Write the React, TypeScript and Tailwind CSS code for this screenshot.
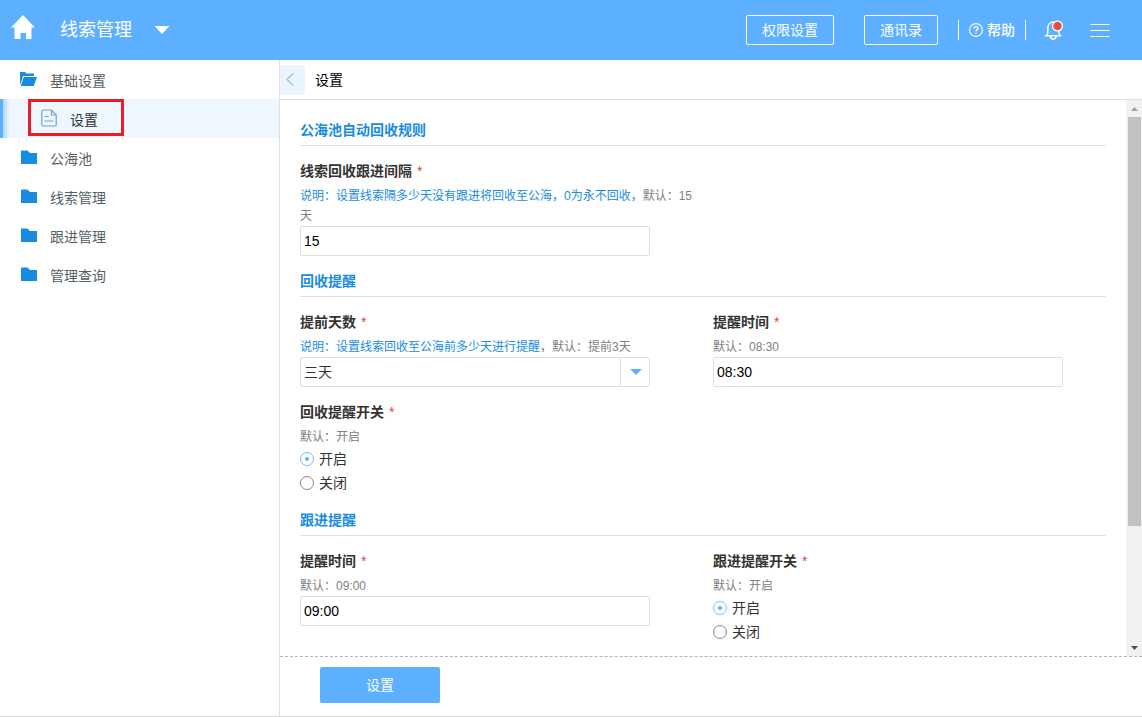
import { useState } from 'react';
import type { ReactNode } from 'react';

const folders = ['公海池', '线索管理', '跟进管理', '管理查询'];

function HomeIcon() {
  return (
    <svg width="24" height="24" viewBox="0 0 24 24" fill="#fff">
      <path d="M12 0 L24 12.5 H20.5 V24 H15 V18 H9.5 V24 H3.5 V12.5 H0 Z" />
    </svg>
  );
}

function FolderIcon() {
  return (
    <svg width="16" height="14" viewBox="0 0 16 14" fill="#188ce0">
      <path d="M0 0.5 H6.5 L9 3 H16 V14 H0 Z" />
    </svg>
  );
}

function FolderOpenIcon() {
  return (
    <svg width="17" height="14" viewBox="0 0 17 14" fill="#188ce0">
      <path d="M0 0 H5 L6.5 1.5 H14 V4 H3 L0.6 12 H0 Z" />
      <path d="M3.7 5 H17 L13.8 14 H0.8 Z" />
    </svg>
  );
}

function DocIcon() {
  return (
    <svg width="16" height="18" viewBox="0 0 16 18" fill="none" stroke="#6fa3d4" strokeWidth="1.2">
      <path d="M10.5 1 H2 Q0.8 1 0.8 2.2 V15.8 Q0.8 17 2 17 H14 Q15.2 17 15.2 15.8 V6 Z" />
      <path d="M10.5 1 V6 H15.2 M3.5 7.5 H7.5 M3.5 12 H12.5" />
    </svg>
  );
}

function HelpIcon() {
  return (
    <svg width="14" height="14" viewBox="0 0 14 14" fill="none" stroke="#fff">
      <circle cx="7" cy="7" r="6.4" strokeWidth="1.1" />
      <path d="M5 5.6 C5 3 9 3 9 5.4 C9 6.8 7 6.8 7 8.4" strokeWidth="1.4" />
      <path d="M7 9.4 V10.8" strokeWidth="1.5" />
    </svg>
  );
}

function BellIcon() {
  return (
    <svg width="20" height="20" viewBox="0 0 20 20" fill="none" stroke="#fff" strokeWidth="1.5">
      <path d="M0.8 15.8 H17.5 M3 15.5 C4 14 3.8 12 3.8 8.5 C3.8 4.5 6.2 2 9.3 2 C12.6 2 14.8 4.5 14.8 8.5 C14.8 12 14.8 14 16 15.5" />
      <path d="M6.3 16 C6.5 20.2 12 20.2 12.2 16" />
      <circle cx="13.5" cy="6" r="4.9" fill="#e0504a" strokeWidth="1.3" />
    </svg>
  );
}

function SectionTitle({ children }: { children: ReactNode }) {
  return (
    <h2 className="mt-[10px] border-b border-[#dddfe1] text-sm leading-[30px] font-bold text-[#188ce0]">
      {children}
    </h2>
  );
}

function FieldHead({ id, label, children }: { id: string; label: string; children: ReactNode }) {
  return (
    <>
      <label htmlFor={id} className="mb-[5px] flex gap-[5px] text-sm leading-5 font-bold text-[#333]">
        {label}
        <span className="font-normal text-[#e0443e]">*</span>
      </label>
      <p className="text-xs leading-5 text-[#808080]">{children}</p>
    </>
  );
}

function TextField({ id, label, hint, value }: { id: string; label: string; hint: ReactNode; value: string }) {
  const [text, setText] = useState(value);

  return (
    <div>
      <FieldHead id={id} label={label}>{hint}</FieldHead>
      <input
        id={id}
        type="text"
        value={text}
        onChange={(e) => setText(e.target.value)}
        className="block h-[30px] w-full max-w-[350px] rounded-xs border border-[#dddfe1] px-[3px] text-sm text-black outline-none"
      />
    </div>
  );
}

function SwitchField({ id, label }: { id: string; label: string }) {
  const [value, setValue] = useState('开启');

  return (
    <div>
      <FieldHead id={`${id}-开启`} label={label}>默认：开启</FieldHead>
      {['开启', '关闭'].map((option) => (
        <label key={option} className="flex h-6 items-center gap-[5px] text-sm text-[#333]">
          <input
            id={`${id}-${option}`}
            type="radio"
            name={id}
            checked={value === option}
            onChange={() => setValue(option)}
            className="grid h-[14px] w-[14px] appearance-none place-content-center rounded-full border border-[#888] before:h-1 before:w-1 before:rounded-full checked:border-[#7ab8fa] checked:before:bg-[#5cb0ff]"
          />
          {option}
        </label>
      ))}
    </div>
  );
}

function Header() {
  return (
    <header className="flex h-[60px] shrink-0 items-center bg-[#5cb0ff] pr-8 pl-[11px] text-white">
      <a href="#" aria-label="首页" className="pb-[6px]">
        <HomeIcon />
      </a>
      <button type="button" className="ml-[25px] flex items-center gap-[22px] text-lg">
        线索管理
        <svg width="16" height="8" viewBox="0 0 16 8" fill="#fff">
          <path d="M0.5 0 H15.5 L8 8 Z" />
        </svg>
      </button>
      <div className="ml-auto flex items-center text-sm">
        <button type="button" className="h-[30px] rounded-xs border border-white px-[15px]">权限设置</button>
        <button type="button" className="ml-[30px] h-[30px] rounded-xs border border-white px-[15px]">通讯录</button>
        <a href="#" className="ml-5 flex h-5 items-center gap-1 border-x border-white px-[10px] font-medium">
          <HelpIcon />
          帮助
        </a>
        <button type="button" aria-label="消息" className="ml-[18px]">
          <BellIcon />
        </button>
        <button type="button" aria-label="菜单" className="ml-[26px]">
          <svg width="20" height="14" viewBox="0 0 20 14" stroke="#fff">
            <path d="M0.5 1.5 H19.5 M0.5 7.5 H19.5 M0.5 13.5 H19.5" />
          </svg>
        </button>
      </div>
    </header>
  );
}

function Sidebar() {
  return (
    <nav className="w-[280px] shrink-0 border-r border-[#dddfe1] text-sm text-[#555f66]">
      <a href="#" className="flex h-[39px] items-center gap-[13px] pb-[2px] pl-5">
        <FolderOpenIcon />
        <span className="pt-1">基础设置</span>
      </a>
      <a href="#" className="relative flex h-[39px] items-center gap-[13px] border-l-3 border-[#5cb0ff] bg-[#eef7ff] pb-[2px] pl-[38px] text-[#333]">
        <span className="absolute inset-y-0 left-0 w-[7px] bg-linear-to-r from-[#b5d6f6] to-[#eef7ff]" />
        <DocIcon />
        <span className="pt-1">设置</span>
        <span className="absolute top-0 left-[25px] h-[37px] w-24 border-3 border-[#ed1c24]" />
      </a>
      {folders.map((name) => (
        <a key={name} href="#" className="flex h-[39px] items-center gap-[13px] pb-[2px] pl-[21px]">
          <FolderIcon />
          <span className="pt-1">{name}</span>
        </a>
      ))}
    </nav>
  );
}

function ScrollRail() {
  return (
    <div className="flex w-4 shrink-0 flex-col bg-[#f1f1f1] pr-px pl-[2px]" aria-hidden="true">
      <div className="flex h-[17px] shrink-0 items-center justify-center">
        <svg width="7" height="4" viewBox="0 0 7 4" fill="#a0a0a0"><path d="M3.5 0 L7 4 H0 Z" /></svg>
      </div>
      <div className="flex min-h-0 flex-1 flex-col">
        <div className="flex-[18] bg-[#c1c1c1]" />
        <div className="flex-[5]" />
      </div>
      <div className="flex h-[17px] shrink-0 items-center justify-center">
        <svg width="7" height="4" viewBox="0 0 7 4" fill="#505050"><path d="M0 0 H7 L3.5 4 Z" /></svg>
      </div>
    </div>
  );
}

export default function App() {
  const [days, setDays] = useState('三天');

  return (
    <div className="flex h-screen flex-col border-b border-[#d3d5d7] bg-white font-['Liberation_Sans','Noto_Sans_CJK_SC',sans-serif]">
      <Header />
      <div className="flex min-h-0 flex-1">
        <Sidebar />
        <main className="flex min-w-0 flex-1 flex-col">
          <div className="flex h-10 shrink-0 items-center gap-[10px] border-b border-[#dddfe1]">
            <button type="button" aria-label="返回" className="flex h-[30px] w-[25px] items-center rounded-r-sm bg-[#eaf4ff] pl-[6px]">
              <svg width="8" height="13" viewBox="0 0 8 13" fill="none" stroke="#4a90d9">
                <path d="M7 0.5 L1 6.5 L7 12.5" />
              </svg>
            </button>
            <h1 className="text-sm text-black">设置</h1>
          </div>

          <form className="flex min-h-0 flex-1 flex-col" onSubmit={(e) => e.preventDefault()}>
            <div className="flex min-h-0 flex-1">
              <div className="min-w-0 flex-1 overflow-y-auto px-5 pt-[5px] [scrollbar-width:none]">
                <SectionTitle>公海池自动回收规则</SectionTitle>
                <div className="grid grid-cols-2 gap-x-5 gap-y-[15px] pt-[15px]">
                  <TextField
                    id="interval"
                    label="线索回收跟进间隔"
                    value="15"
                    hint={
                      <>
                        <span className="text-[#188ce0]">说明：设置线索隔多少天没有跟进将回收至公海，0为永不回收，</span>
                        默认：15天
                      </>
                    }
                  />
                </div>

                <SectionTitle>回收提醒</SectionTitle>
                <div className="grid grid-cols-2 gap-x-5 gap-y-[15px] pt-[15px]">
                  <div>
                    <FieldHead id="days" label="提前天数">
                      <span className="text-[#188ce0]">说明：设置线索回收至公海前多少天进行提醒</span>
                      ，默认：提前3天
                    </FieldHead>
                    <div className="relative max-w-[350px]">
                      <select
                        id="days"
                        value={days}
                        onChange={(e) => setDays(e.target.value)}
                        className="block h-[30px] w-full appearance-none rounded-xs border border-[#dddfe1] px-[3px] text-sm text-[#333] outline-none"
                      >
                        <option>一天</option>
                        <option>二天</option>
                        <option>三天</option>
                      </select>
                      <span className="pointer-events-none absolute inset-y-0 right-0 flex w-[30px] items-center justify-center border-l border-[#dddfe1]">
                        <svg width="12" height="6" viewBox="0 0 12 6" fill="#5cb0ff"><path d="M0 0 H12 L6 6 Z" /></svg>
                      </span>
                    </div>
                  </div>
                  <TextField id="remind-time" label="提醒时间" hint="默认：08:30" value="08:30" />
                  <SwitchField id="recycle-switch" label="回收提醒开关" />
                </div>

                <SectionTitle>跟进提醒</SectionTitle>
                <div className="grid grid-cols-2 gap-x-5 gap-y-[15px] pt-[15px]">
                  <TextField id="follow-time" label="提醒时间" hint="默认：09:00" value="09:00" />
                  <SwitchField id="follow-switch" label="跟进提醒开关" />
                </div>
              </div>
              <ScrollRail />
            </div>

            <div className="shrink-0 border-t border-dashed border-[#b5b5b5] px-10 pt-[10px] pb-[13px]">
              <button type="submit" className="block h-9 w-[120px] rounded-xs bg-[#5cb0ff] text-sm text-white">
                设置
              </button>
            </div>
          </form>
        </main>
      </div>
    </div>
  );
}
